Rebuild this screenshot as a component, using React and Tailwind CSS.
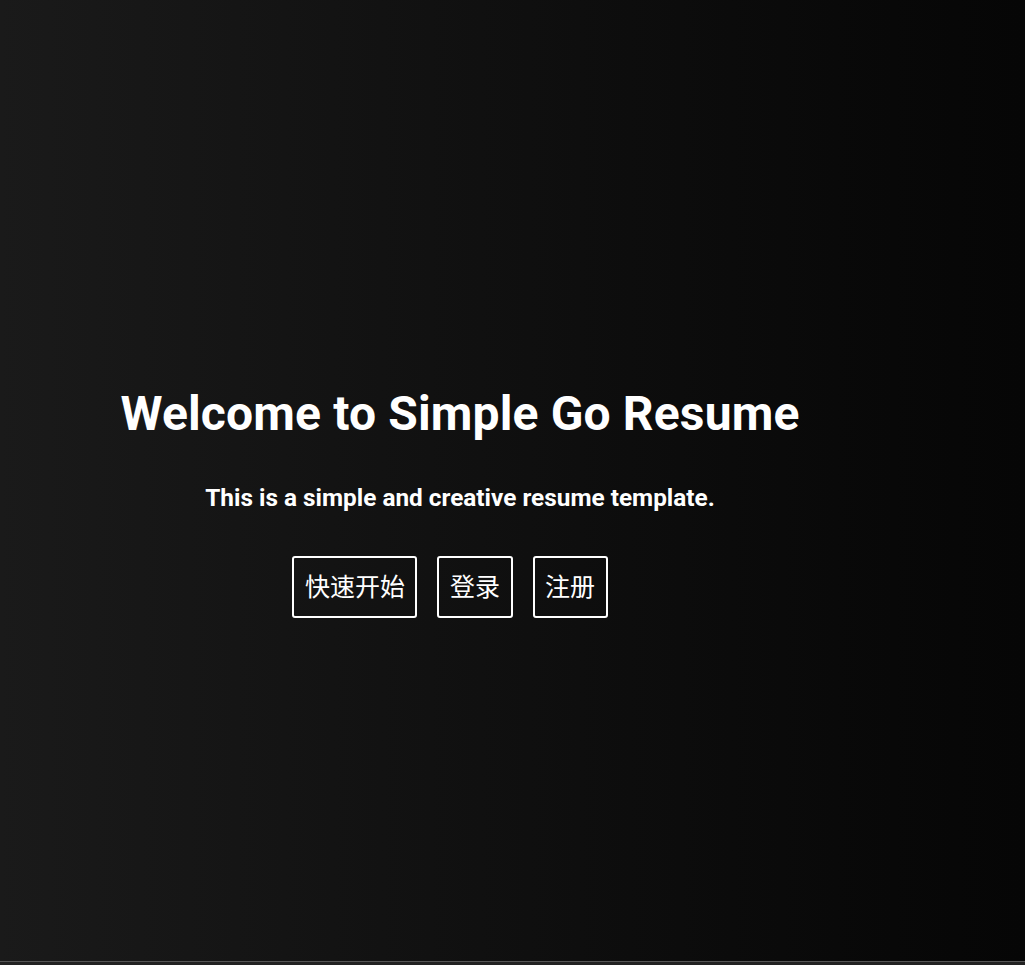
export default function App() {
  return (
    <div className="min-h-screen flex flex-col bg-[#111]" style={{ fontFamily: 'Roboto, "Noto Sans CJK SC", sans-serif' }}>
      {/* Hero */}
      <section className="h-[961px] flex items-center bg-gradient-to-r from-[#1a1a1a] to-[#060606]">
        <div className="w-[920px] flex flex-col items-center text-white pt-[42px]">
          <h1 className="text-[48px] leading-[1.2] font-bold tracking-[0.15px]">Welcome to Simple Go Resume</h1>
          <p className="mt-[39px] text-[24.35px] leading-[1.4] font-bold">This is a simple and creative resume template.</p>
          <div className="mt-[41px] flex">
            <button className="mr-5 h-[62px] px-[10.5px] text-[25px] border-2 border-white rounded-[3px] bg-transparent text-white">快速开始</button>
            <button className="mr-5 h-[62px] px-[10.5px] text-[25px] border-2 border-white rounded-[3px] bg-transparent text-white">登录</button>
            <button className="mr-5 h-[62px] px-[10.5px] text-[25px] border-2 border-white rounded-[3px] bg-transparent text-white">注册</button>
          </div>
        </div>
      </section>
      {/* Footer */}
      <footer className="h-10 border-t border-[#555] bg-[#222]" />
    </div>
  );
}
